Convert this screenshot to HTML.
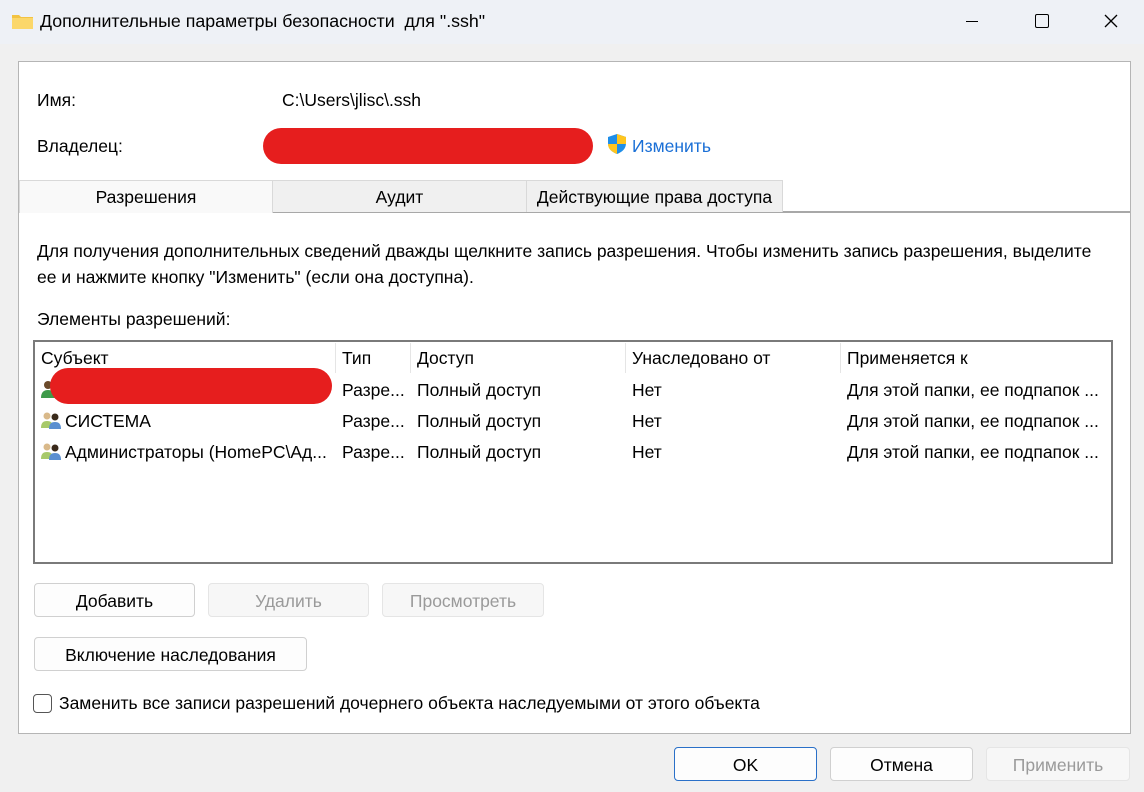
<!DOCTYPE html>
<html><head><meta charset="utf-8"><style>
*{box-sizing:border-box;margin:0;padding:0}
body{width:1144px;height:792px;background:#f0f0f0;font-family:"Liberation Sans",sans-serif;font-size:17.5px;color:#000;position:relative;overflow:hidden}
.a{position:absolute;white-space:nowrap}
.btn{position:absolute;border:1px solid #d0d0d0;border-radius:4px;background:#fdfdfd;text-align:center;line-height:34px;height:34px}
.dis{color:#9a9a9a;background:#f7f7f7;border-color:#e5e5e5}
.tab{position:absolute;top:180px;height:32px;border:1px solid #d9d9d9;border-bottom:none;background:#f0f0f0;text-align:center;line-height:33px}
</style></head><body>
<div class="a" style="left:0;top:0;width:1144px;height:44px;background:#eef1f6"></div>
<svg class="a" style="left:11px;top:12px" width="23" height="18"><path d="M1 3h7l2 2h12v12H1z" fill="#f3c342"/><path d="M1 6h21v11H1z" fill="#fbd76a"/></svg>
<div class="a" style="left:40px;top:11px;font-size:17.8px">Дополнительные параметры безопасности&nbsp; для ".ssh"</div>
<div class="a" style="left:966px;top:21px;width:12px;height:1px;background:#000"></div>
<div class="a" style="left:1035px;top:14px;width:14px;height:14px;border:1.5px solid #000;border-radius:2px"></div>
<svg class="a" style="left:1104px;top:14px" width="14" height="14"><path d="M1 1L13 13M13 1L1 13" stroke="#000" stroke-width="1.3"/></svg>

<div class="a" style="left:18px;top:61px;width:1113px;height:673px;background:#fff;border:1px solid #b5b5b5"></div>
<div class="a" style="left:37px;top:90px">Имя:</div>
<div class="a" style="left:282px;top:90px">C:\Users\jlisc\.ssh</div>
<div class="a" style="left:37px;top:136px">Владелец:</div>
<div class="a" style="left:263px;top:128px;width:330px;height:36px;background:#e61e1e;border-radius:18px"></div>
<svg class="a" style="left:606px;top:133px" width="22" height="22"><path d="M11 1L20 4V10C20 16 16 19 11 21C6 19 2 16 2 10V4Z" fill="#1f8ee8"/><path d="M11 1L20 4V11H11Z" fill="#ffc51e"/><path d="M2 11H11V21C6 19 2 16 2 11Z" fill="#ffc51e"/></svg>
<div class="a" style="left:632px;top:136px;color:#1a6fd6">Изменить</div>

<div class="a" style="left:272px;top:211px;width:858px;height:2px;background:#a8a8a8"></div>
<div class="tab" style="left:272px;width:255px">Аудит</div>
<div class="tab" style="left:526px;width:257px">Действующие права доступа</div>
<div class="tab" style="left:19px;width:254px;background:#f9f9f9;height:33px">Разрешения</div>

<div class="a" style="left:37px;top:238px;line-height:26px">Для получения дополнительных сведений дважды щелкните запись разрешения. Чтобы изменить запись разрешения, выделите<br>ее и нажмите кнопку "Изменить" (если она доступна).</div>
<div class="a" style="left:37px;top:309px">Элементы разрешений:</div>

<div class="a" style="left:33px;top:340px;width:1080px;height:224px;border:2px solid #7a7a7a;background:#fff"></div>
<div class="a" style="left:335px;top:343px;width:1px;height:30px;background:#e5e5e5"></div>
<div class="a" style="left:410px;top:343px;width:1px;height:30px;background:#e5e5e5"></div>
<div class="a" style="left:625px;top:343px;width:1px;height:30px;background:#e5e5e5"></div>
<div class="a" style="left:840px;top:343px;width:1px;height:30px;background:#e5e5e5"></div>
<div class="a" style="left:41px;top:348px">Субъект</div>
<div class="a" style="left:342px;top:348px">Тип</div>
<div class="a" style="left:417px;top:348px">Доступ</div>
<div class="a" style="left:632px;top:348px">Унаследовано от</div>
<div class="a" style="left:847px;top:348px">Применяется к</div>

<svg class="a" style="left:40px;top:379px" width="22" height="20"><circle cx="8" cy="6" r="4" fill="#6b4a2a"/><path d="M1 19c0-6 3-8 7-8s7 2 7 8z" fill="#3e9a4a"/></svg>
<div class="a" style="left:50px;top:368px;width:282px;height:36px;background:#e61e1e;border-radius:18px"></div>
<svg class="a" style="left:40px;top:410px" width="24" height="20"><circle cx="7" cy="6" r="3.5" fill="#d9b98a"/><path d="M1 18c0-5 2-7 6-7s6 2 6 7z" fill="#a7c96a"/><circle cx="15" cy="7" r="3.5" fill="#3a2a1a"/><path d="M9 19c0-5 2-7 6-7s6 2 6 7z" fill="#5a8fd0"/></svg>
<svg class="a" style="left:40px;top:441px" width="24" height="20"><circle cx="7" cy="6" r="3.5" fill="#d9b98a"/><path d="M1 18c0-5 2-7 6-7s6 2 6 7z" fill="#a7c96a"/><circle cx="15" cy="7" r="3.5" fill="#3a2a1a"/><path d="M9 19c0-5 2-7 6-7s6 2 6 7z" fill="#5a8fd0"/></svg>
<div class="a" style="left:65px;top:411px">СИСТЕМА</div>
<div class="a" style="left:65px;top:442px;width:268px;overflow:hidden">Администраторы (HomePC\Ад...</div>
<div class="a" style="left:342px;top:380px">Разре...</div><div class="a" style="left:417px;top:380px">Полный доступ</div><div class="a" style="left:632px;top:380px">Нет</div><div class="a" style="left:847px;top:380px;width:258px;overflow:hidden">Для этой папки, ее подпапок ...</div>
<div class="a" style="left:342px;top:411px">Разре...</div><div class="a" style="left:417px;top:411px">Полный доступ</div><div class="a" style="left:632px;top:411px">Нет</div><div class="a" style="left:847px;top:411px;width:258px;overflow:hidden">Для этой папки, ее подпапок ...</div>
<div class="a" style="left:342px;top:442px">Разре...</div><div class="a" style="left:417px;top:442px">Полный доступ</div><div class="a" style="left:632px;top:442px">Нет</div><div class="a" style="left:847px;top:442px;width:258px;overflow:hidden">Для этой папки, ее подпапок ...</div>

<div class="btn" style="left:34px;top:583px;width:161px">Добавить</div>
<div class="btn dis" style="left:208px;top:583px;width:161px">Удалить</div>
<div class="btn dis" style="left:382px;top:583px;width:162px">Просмотреть</div>
<div class="btn" style="left:34px;top:637px;width:273px">Включение наследования</div>
<div class="a" style="left:33px;top:694px;width:19px;height:19px;border:1px solid #555;border-radius:4px;background:#fff"></div>
<div class="a" style="left:59px;top:693px">Заменить все записи разрешений дочернего объекта наследуемыми от этого объекта</div>

<div class="btn" style="left:674px;top:747px;width:143px;border-color:#2a70c8">OK</div>
<div class="btn" style="left:830px;top:747px;width:143px">Отмена</div>
<div class="btn dis" style="left:986px;top:747px;width:144px">Применить</div>
</body></html>
